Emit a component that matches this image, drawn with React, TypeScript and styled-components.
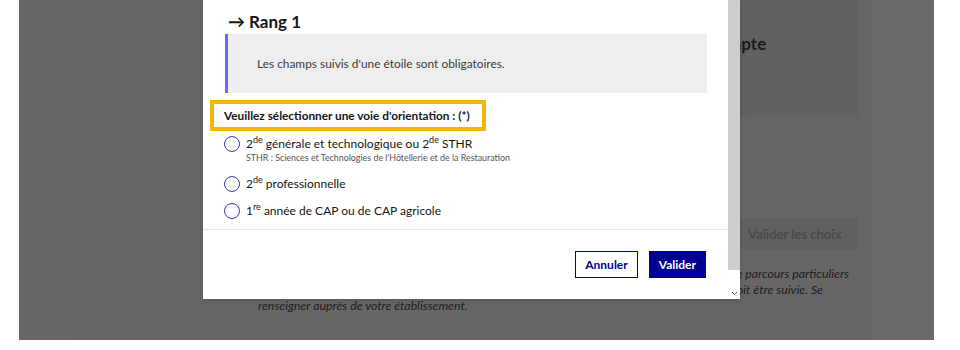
import styled, { createGlobalStyle } from 'styled-components'

const GlobalStyle = createGlobalStyle`
  html, body {
    margin: 0;
    padding: 0;
    background: #ffffff;
  }
  body {
    font-family: Lato, 'Open Sans', 'Liberation Sans', sans-serif;
    color: #161616;
  }
`

const Page = styled.div`
  position: relative;
  width: 960px;
  height: 350px;
  overflow: hidden;
  background: #ffffff;
`

const Backdrop = styled.div`
  display: grid;
  grid-template-columns: 50px 803px 62px;
  width: 915px;
  height: 340px;
  margin-left: 19px;
  background: #676767;
`

const SideBand = styled.div<{ $tone: string }>`
  background: ${({ $tone }) => $tone};
`

const MainColumn = styled.div`
  display: flex;
  flex-direction: column;
  background: #666666;
  border-left: 1px solid #6c6c6c;
`

const CardRow = styled.div`
  display: flex;
  justify-content: flex-end;
  height: 116px;
  padding-right: 14px;
`

const AccountCard = styled.div`
  width: 300px;
  background: #616161;
  padding: 33px 0 0 112px;
  box-sizing: border-box;
  font-size: 17px;
  font-weight: 700;
  color: #1a1a1a;
`

const ButtonRow = styled.div`
  display: flex;
  justify-content: flex-end;
  padding: 102px 14px 0 0;
`

const GhostButton = styled.div`
  width: 140px;
  height: 31px;
  display: flex;
  align-items: center;
  padding-left: 30px;
  box-sizing: border-box;
  background: #606060;
  color: #4a4a4a;
  font-size: 13px;
  font-weight: 700;
`

const Notice = styled.div`
  margin: 17px 20px 0 188px;
  font-size: 12.3px;
  font-style: italic;
  line-height: 16px;
  color: #1c1c1c;
`

const NoticeLine = styled.div<{ $right?: number }>`
  text-align: ${({ $right }) => ($right !== undefined ? 'right' : 'left')};
  padding-right: ${({ $right }) => $right ?? 0}px;
  white-space: nowrap;
`

/* dialog */
const Dialog = styled.div`
  position: absolute;
  left: 203px;
  top: 0;
  width: 537px;
  height: 299px;
  display: flex;
  background: #ffffff;
  box-shadow: 0 2px 6px rgba(0, 0, 0, 0.15);
`

const DialogContent = styled.div`
  flex: 1;
  display: flex;
  flex-direction: column;
`

const DialogBody = styled.div`
  padding: 10px 21px 0 22px;
  height: 229px;
  box-sizing: border-box;
`

const Title = styled.h1`
  display: flex;
  align-items: center;
  gap: 4px;
  margin: 0 0 0 3px;
  font-size: 17px;
  line-height: 24px;
  font-weight: 700;
  color: #161616;
`

const Callout = styled.div`
  height: 59px;
  display: flex;
  align-items: center;
  padding-left: 29px;
  background: #eeeeee;
  border-left: 3px solid #6a6af4;
  font-size: 11.9px;
  color: #3a3a3a;
`

const Fieldset = styled.fieldset`
  margin: 7px 0 0 -15px;
  padding: 0;
  border: 0;
`

const Legend = styled.legend`
  width: 276px;
  height: 31px;
  box-sizing: border-box;
  padding: 0 0 0 10px;
  display: flex;
  align-items: center;
  border: 4px solid #f5b50c;
  font-size: 11.8px;
  font-weight: 700;
  color: #161616;
  white-space: nowrap;
`

const Options = styled.div`
  display: flex;
  flex-direction: column;
  padding-left: 14px;
`

const Option = styled.label<{ $gap: number }>`
  display: flex;
  align-items: flex-start;
  gap: 6px;
  margin-top: ${({ $gap }) => $gap}px;
  cursor: pointer;
`

const RadioCircle = styled.span`
  flex: none;
  width: 16px;
  height: 16px;
  box-sizing: border-box;
  border: 1.3px solid #3b3b9c;
  border-radius: 50%;
`

const OptionText = styled.span`
  display: flex;
  flex-direction: column;
  font-size: 12px;
  line-height: 16px;
  color: #161616;
`

const Hint = styled.span`
  font-size: 8.9px;
  line-height: 12px;
  color: #555555;
  white-space: nowrap;
`

const Sup = styled.sup`
  font-size: 9px;
  line-height: 0;
  vertical-align: 5px;
`

const DialogFooter = styled.div`
  flex: 1;
  display: flex;
  justify-content: flex-end;
  align-items: flex-start;
  gap: 11px;
  padding: 21px 22px 0 0;
  border-top: 1px solid #e5e5e5;
`

const Button = styled.button<{ $primary?: boolean }>`
  height: 27px;
  padding: 0 9px;
  font-family: inherit;
  font-size: 12px;
  font-weight: 700;
  color: ${({ $primary }) => ($primary ? '#ffffff' : '#000091')};
  background: ${({ $primary }) => ($primary ? '#000091' : '#ffffff')};
  border: 1px solid #000091;
  cursor: pointer;
`

const Scrollbar = styled.div`
  width: 12px;
  display: flex;
  flex-direction: column;
  align-items: center;
  background: #ffffff;
`

const ScrollThumb = styled.div`
  width: 100%;
  height: 275px;
  background: #cdcdcd;
`

const ScrollArrow = styled.div`
  margin-top: 10px;
`

const App = () => {
  return (
    <Page>
      <GlobalStyle />
      <Backdrop>
        <SideBand $tone='#676767' />
        <MainColumn>
          <CardRow>
            <AccountCard>Mon compte</AccountCard>
          </CardRow>
          <ButtonRow>
            <GhostButton>Valider les choix</GhostButton>
          </ButtonRow>
          <Notice>
            <NoticeLine $right={3}>de parcours particuliers</NoticeLine>
            <NoticeLine $right={29}>doit être suivie. Se</NoticeLine>
            <NoticeLine>renseigner auprès de votre établissement.</NoticeLine>
          </Notice>
        </MainColumn>
        <SideBand $tone='#6a6a6a' />
      </Backdrop>

      <Dialog role='dialog'>
        <DialogContent>
          <DialogBody>
            <Title>
              <span>→</span>
              <span>Rang 1</span>
            </Title>
            <Callout>Les champs suivis d'une étoile sont obligatoires.</Callout>
            <Fieldset>
              <Legend>Veuillez sélectionner une voie d'orientation : (*)</Legend>
              <Options>
                <Option $gap={5}>
                  <RadioCircle />
                  <OptionText>
                    <span>
                      2<Sup>de</Sup> générale et technologique ou 2<Sup>de</Sup> STHR
                    </span>
                    <Hint>
                      STHR : Sciences et Technologies de l'Hôtellerie et de la Restauration
                    </Hint>
                  </OptionText>
                </Option>
                <Option $gap={12}>
                  <RadioCircle />
                  <OptionText>
                    <span>
                      2<Sup>de</Sup> professionnelle
                    </span>
                  </OptionText>
                </Option>
                <Option $gap={11}>
                  <RadioCircle />
                  <OptionText>
                    <span>
                      1<Sup>re</Sup> année de CAP ou de CAP agricole
                    </span>
                  </OptionText>
                </Option>
              </Options>
            </Fieldset>
          </DialogBody>
          <DialogFooter>
            <Button>Annuler</Button>
            <Button $primary>Valider</Button>
          </DialogFooter>
        </DialogContent>
        <Scrollbar>
          <ScrollThumb />
          <ScrollArrow>
            <svg width='7' height='5' viewBox='0 0 7 5'>
              <path d='M1 1 L3.5 3.5 L6 1' fill='none' stroke='#555' strokeWidth='1' />
            </svg>
          </ScrollArrow>
        </Scrollbar>
      </Dialog>
    </Page>
  )
}

export default App
